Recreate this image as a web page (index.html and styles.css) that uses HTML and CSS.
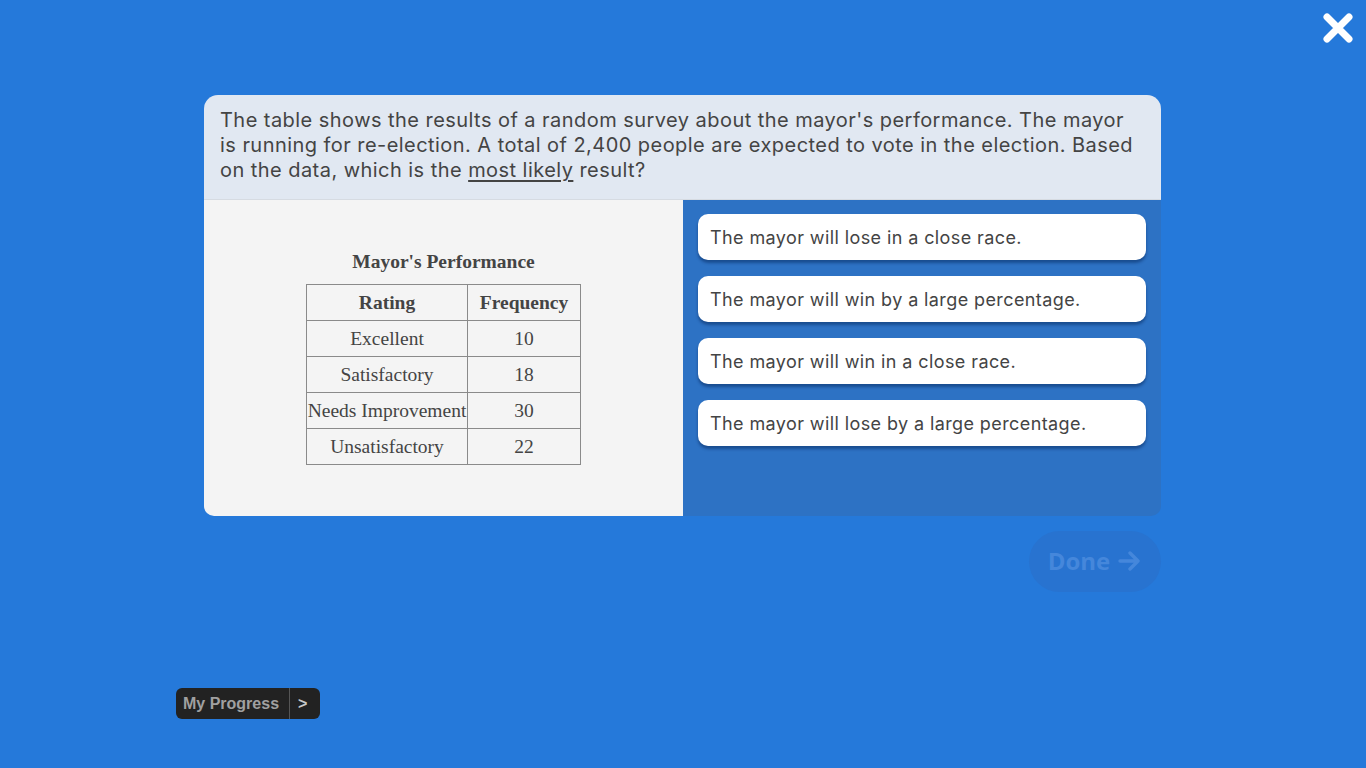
FILE: index.html
```html
<!DOCTYPE html>
<html>
<head>
<meta charset="utf-8">
<link rel="stylesheet" href="styles.css">
</head>
<body>
<div class="page">
  <button class="close" aria-label="Close">
    <svg width="34" height="34" viewBox="0 0 34 34"><path d="M6 6 L28 28 M28 6 L6 28" stroke="#fff" stroke-width="7" stroke-linecap="round"/></svg>
  </button>
  <div class="card">
    <div class="question">The table shows the results of a random survey about the mayor's performance. The mayor is running for re-election. A total of 2,400 people are expected to vote in the election. Based on the data, which is the <u>most likely</u> result?</div>
    <div class="body">
      <div class="left">
        <div class="title">Mayor's Performance</div>
        <table class="data">
          <tr><th>Rating</th><th>Frequency</th></tr>
          <tr><td>Excellent</td><td>10</td></tr>
          <tr><td>Satisfactory</td><td>18</td></tr>
          <tr><td>Needs Improvement</td><td>30</td></tr>
          <tr><td>Unsatisfactory</td><td>22</td></tr>
        </table>
      </div>
      <div class="right">
        <div class="answer">The mayor will lose in a close race.</div>
        <div class="answer">The mayor will win by a large percentage.</div>
        <div class="answer">The mayor will win in a close race.</div>
        <div class="answer">The mayor will lose by a large percentage.</div>
      </div>
    </div>
  </div>
  <div class="actions">
    <button class="done">Done <svg width="24" height="20" viewBox="0 0 24 20"><path d="M2 10 H20 M12 2 L20 10 L12 18" stroke="currentColor" stroke-width="3.4" fill="none" stroke-linecap="round" stroke-linejoin="round"/></svg></button>
  </div>
  <div class="progress"><span class="label">My Progress</span><span class="arrow">&gt;</span></div>
</div>
</body>
</html>
```
FILE: styles.css
```css
html, body { margin: 0; padding: 0; }
body { background: #2579da; width: 1366px; height: 768px; overflow: hidden; font-family: Inter, "Open Sans", sans-serif; }
.page { position: relative; width: 1366px; height: 768px; padding-top: 95px; box-sizing: border-box; }
.close { position: absolute; top: 11px; right: 11px; background: none; border: 0; padding: 0; cursor: pointer; }
.card { margin-left: 204px; width: 957px; border-radius: 14px 14px 10px 10px; overflow: hidden; }
.question { background: #e1e8f2; color: #444; font-size: 20px; line-height: 25px; padding: 13px 16px 16px 16px; height: 75px; border-bottom: 1px solid #d6dbe2; letter-spacing: 0.45px; }
.question u { text-decoration-thickness: 1.5px; text-underline-offset: 3px; }
.body { display: flex; height: 316px; }
.left { width: 479px; background: #f4f4f4; display: flex; flex-direction: column; align-items: center; padding-top: 51px; box-sizing: border-box; }
.title { font-family: "Liberation Serif", serif; font-weight: bold; font-size: 19.5px; color: #444; margin-bottom: 11px; }
.data { border-collapse: collapse; font-family: "Liberation Serif", serif; font-size: 19.5px; color: #444; }
.data th, .data td { border: 1px solid #8a8a8a; height: 35px; padding: 0; text-align: center; }
.data th:first-child, .data td:first-child { width: 160px; }
.data th:last-child, .data td:last-child { width: 112px; }
.data th { font-weight: bold; }
.right { flex: 1; background: #2d72c4; padding: 14px 15px; display: flex; flex-direction: column; gap: 16px; }
.answer { background: #fff; border-radius: 10px; height: 46px; box-sizing: border-box; padding: 0 12px; display: flex; align-items: center; color: #444; font-size: 18px; letter-spacing: 0.4px; box-shadow: 0 3px 3px rgba(0, 30, 80, 0.45); }
.actions { margin-left: 1029px; margin-top: 15px; }
.done { width: 132px; height: 61px; border-radius: 31px; background: #2873d0; border: 0; color: #4587db; font-family: "Open Sans", sans-serif; font-weight: bold; font-size: 24px; line-height: 1; display: flex; align-items: center; justify-content: center; gap: 8px; padding: 0 0 2px 0; }
.progress { position: absolute; left: 176px; top: 688px; height: 31px; background: #222; border-radius: 6px; display: flex; align-items: center; font-family: "Liberation Sans", sans-serif; font-weight: bold; font-size: 16px; color: #a0a0a0; }
.progress .label { padding: 0 10px 0 7px; border-right: 1px solid #555; height: 31px; line-height: 31px; }
.progress .arrow { padding: 0 13px 0 8px; color: #c8c8c8; }
```
